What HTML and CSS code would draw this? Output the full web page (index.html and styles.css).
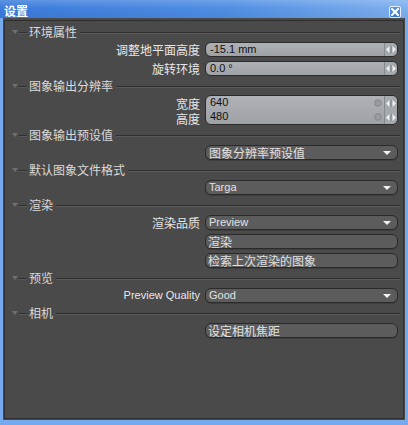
FILE: index.html
```html
<!DOCTYPE html>
<html lang="zh-CN">
<head>
<meta charset="utf-8">
<title>设置</title>
<link rel="stylesheet" href="styles.css">
</head>
<body>
<div class="window">
  <div class="titlebar">
    <span class="title">设置</span>
    <span class="close">
      <svg width="8" height="8" viewBox="0 0 8 8"><path d="M1 1L7 7M7 1L1 7" stroke="#fff" stroke-width="2" stroke-linecap="square"/></svg>
    </span>
  </div>
  <div class="sides">
    <div class="frame">
      <div class="panel">

        <div class="hdr"><span class="tri"></span><span class="dash"></span><span class="htxt">环境属性</span><span class="rule"></span></div>
        <div class="row">
          <span class="lbl">调整地平面高度</span>
          <div class="num"><span class="val en">-15.1 mm</span><span class="spin"><svg width="10" height="7" viewBox="0 0 10 7"><path d="M0 3.5L3.5 0V7Z M10 3.5L6.5 0V7Z" fill="#eef0f2"/><path d="M5 0V7" stroke="#7d8186" stroke-width="1"/></svg></span></div>
        </div>
        <div class="row">
          <span class="lbl">旋转环境</span>
          <div class="num"><span class="val en">0.0 °</span><span class="spin"><svg width="10" height="7" viewBox="0 0 10 7"><path d="M0 3.5L3.5 0V7Z M10 3.5L6.5 0V7Z" fill="#eef0f2"/><path d="M5 0V7" stroke="#7d8186" stroke-width="1"/></svg></span></div>
        </div>

        <div class="hdr"><span class="tri"></span><span class="dash"></span><span class="htxt">图象输出分辨率</span><span class="rule"></span></div>
        <div class="row dbl">
          <div class="lbls"><span class="lbl">宽度</span><span class="lbl">高度</span></div>
          <div class="num pair">
            <div class="sub"><span class="val en">640</span><span class="dot"><svg width="8" height="8" viewBox="0 0 8 8"><circle cx="4" cy="4" r="3.2" fill="#989ca0" stroke="#8a8e92" stroke-width="1.2"/></svg></span><span class="spin"><svg width="10" height="7" viewBox="0 0 10 7"><path d="M0 3.5L3.5 0V7Z M10 3.5L6.5 0V7Z" fill="#eef0f2"/><path d="M5 0V7" stroke="#7d8186" stroke-width="1"/></svg></span></div>
            <div class="sub"><span class="val en">480</span><span class="dot"><svg width="8" height="8" viewBox="0 0 8 8"><circle cx="4" cy="4" r="3.2" fill="#989ca0" stroke="#8a8e92" stroke-width="1.2"/></svg></span><span class="spin"><svg width="10" height="7" viewBox="0 0 10 7"><path d="M0 3.5L3.5 0V7Z M10 3.5L6.5 0V7Z" fill="#eef0f2"/><path d="M5 0V7" stroke="#7d8186" stroke-width="1"/></svg></span></div>
          </div>
        </div>

        <div class="hdr"><span class="tri"></span><span class="dash"></span><span class="htxt">图象输出预设值</span><span class="rule"></span></div>
        <div class="row">
          <span class="lbl"></span>
          <div class="drop"><span class="txt">图象分辨率预设值</span><span class="arrow"></span></div>
        </div>

        <div class="hdr"><span class="tri"></span><span class="dash"></span><span class="htxt">默认图象文件格式</span><span class="rule"></span></div>
        <div class="row">
          <span class="lbl"></span>
          <div class="drop"><span class="txt en">Targa</span><span class="arrow"></span></div>
        </div>

        <div class="hdr"><span class="tri"></span><span class="dash"></span><span class="htxt">渲染</span><span class="rule"></span></div>
        <div class="row">
          <span class="lbl">渲染品质</span>
          <div class="drop"><span class="txt en">Preview</span><span class="arrow"></span></div>
        </div>
        <div class="row">
          <span class="lbl"></span>
          <div class="btn">渲染</div>
        </div>
        <div class="row">
          <span class="lbl"></span>
          <div class="btn">检索上次渲染的图象</div>
        </div>

        <div class="hdr"><span class="tri"></span><span class="dash"></span><span class="htxt">预览</span><span class="rule"></span></div>
        <div class="row">
          <span class="lbl en">Preview Quality</span>
          <div class="drop"><span class="txt en">Good</span><span class="arrow"></span></div>
        </div>

        <div class="hdr"><span class="tri"></span><span class="dash"></span><span class="htxt">相机</span><span class="rule"></span></div>
        <div class="row">
          <span class="lbl"></span>
          <div class="btn">设定相机焦距</div>
        </div>

      </div>
    </div>
  </div>
</div>
</body>
</html>
```
FILE: styles.css
```css
* { box-sizing: border-box; }

html, body {
  margin: 0;
  padding: 0;
}

body {
  width: 408px;
  height: 425px;
  overflow: hidden;
  font-family: "Noto Sans CJK SC", "Liberation Sans", sans-serif;
  font-size: 12px;
  color: #e6e6e6;
}

.en {
  font-family: "Liberation Sans", "Noto Sans CJK SC", sans-serif;
  font-size: 11px;
}

/* window chrome */
.window {
  width: 408px;
  height: 425px;
  display: flex;
  flex-direction: column;
  background: #74a9ee;
}

.titlebar {
  height: 18px;
  flex: none;
  display: flex;
  justify-content: space-between;
  align-items: flex-start;
  padding: 0 7px 0 4px;
  background:
    linear-gradient(to bottom, rgba(255,255,255,0.18), rgba(255,255,255,0) 45%, rgba(0,0,0,0.05)),
    linear-gradient(to right, #3a7bdc, #4f8ee3 55%, #7fb0ef);
}

.title {
  color: #fff;
  font-weight: bold;
  font-size: 12px;
  line-height: 14px;
  padding-top: 4px;
}

.close {
  margin-top: 6px;
  width: 12px;
  height: 12px;
  border: 1px solid #e4eefb;
  border-radius: 2px;
  background: linear-gradient(#5b95e4, #3a78d6);
  display: flex;
  align-items: center;
  justify-content: center;
}

.sides {
  flex: 1;
  display: flex;
  padding: 0 3px 5px 3px;
  background: #74a9ee;
}

.frame {
  flex: 1;
  display: flex;
  background: #4a4a4a;
  padding: 2px 1px 1px 1px;
}

.panel {
  flex: 1;
  border: 1px solid #2e2e2e;
  background: #4a4a4a;
  padding-top: 3px;
}

/* section header with groove rule */
.hdr {
  height: 16px;
  display: flex;
  align-items: center;
  padding: 0 3px 0 7px;
  color: #dadada;
}

.tri {
  width: 0;
  height: 0;
  border-left: 3px solid transparent;
  border-right: 3px solid transparent;
  border-top: 4px solid #6f6f6f;
  margin-top: -1px;
}

.dash,
.rule {
  height: 2px;
  border-top: 1px solid #2f2f2f;
  border-bottom: 1px solid #5a5a5a;
  margin-top: 1px;
}

.dash {
  width: 8px;
  margin: 1px 2px 0 1px;
}

.htxt {
  line-height: 16px;
  white-space: nowrap;
}

.rule {
  flex: 1;
  margin-left: 3px;
}

/* label / control rows */
.row {
  height: 19px;
  display: grid;
  grid-template-columns: 1fr 193px;
  column-gap: 5px;
  padding: 2px 5px 2px 0;
  align-items: start;
}

.row.dbl {
  height: 33px;
  padding-top: 1px;
}

.lbl {
  text-align: right;
  line-height: 15px;
  white-space: nowrap;
  color: #e8e8e8;
}

.lbls {
  display: flex;
  flex-direction: column;
  padding-top: 1px;
}

.num {
  height: 15px;
  border: 1px solid #2b2b2b;
  border-radius: 6px;
  background: linear-gradient(#aeb2b6, #9ea2a6);
  display: flex;
  color: #111;
  overflow: hidden;
}

.num.pair {
  height: 30px;
  flex-direction: column;
}

.sub {
  height: 14px;
  display: flex;
}

.val {
  flex: 1;
  padding-left: 4px;
  line-height: 13px;
}

.dot {
  width: 12px;
  display: flex;
  align-items: center;
  justify-content: center;
}

.spin {
  width: 13px;
  border-left: 1px solid #858a8f;
  background: #a6aaae;
  display: flex;
  align-items: center;
  justify-content: center;
}

.drop,
.btn {
  height: 15px;
  border: 1px solid #2a2a2a;
  border-radius: 6px;
  background: #5c5c5c;
  color: #e2e2e2;
  box-shadow: 0 1px 0 #3e3e3e;
  line-height: 13px;
  white-space: nowrap;
}

.drop {
  display: flex;
  align-items: center;
  padding: 0 6px 0 3px;
}

.drop .txt {
  flex: 1;
  line-height: 13px;
}

.arrow {
  width: 0;
  height: 0;
  border-left: 4px solid transparent;
  border-right: 4px solid transparent;
  border-top: 4px solid #f2f2f2;
  margin-top: 1px;
}

.btn {
  padding-left: 2px;
}
```
